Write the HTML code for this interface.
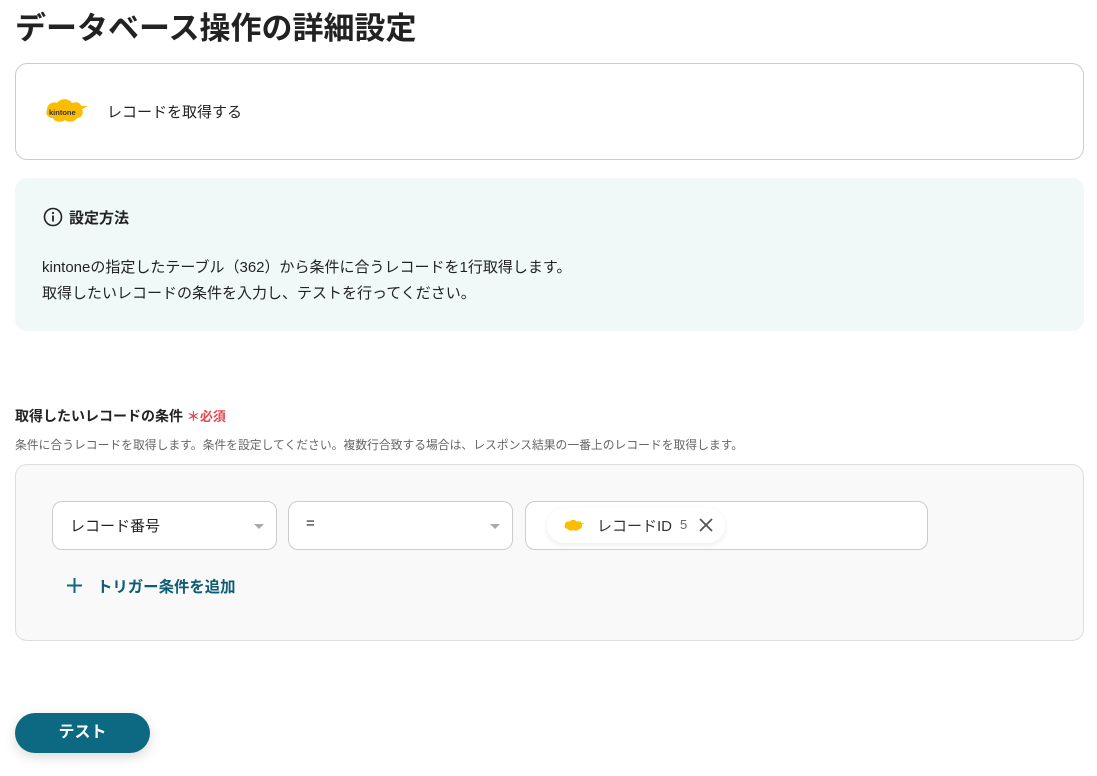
<!DOCTYPE html>
<html><head><meta charset="utf-8"><style>
*{box-sizing:border-box;margin:0;padding:0}
body{width:1097px;height:776px;background:#fff;font-family:"Liberation Sans","Noto Sans CJK JP",sans-serif;color:#222;position:relative;overflow:hidden}
.abs{position:absolute}
h1{position:absolute;left:15px;top:3px;font-size:31px;font-weight:700;color:#222}
.card{left:15px;top:63px;width:1069px;height:97px;border:1px solid #ccc;border-radius:12px}
.info{left:15px;top:178px;width:1069px;height:153px;background:#f1f9f8;border-radius:12px}
.sel{top:501px;height:49px;border:1px solid #ccc;border-radius:10px;background:#fff;font-size:15px;padding:13px 0 0 17px}
.sel .car{position:absolute;right:12px;top:22px;border:5px solid transparent;border-top:5px solid #aaa}
</style></head><body>
<h1>データベース操作の詳細設定</h1>
<div class="abs card">
<svg class="abs" style="left:27px;top:32px" width="46" height="32" viewBox="0 0 46 32"><path d="M4 14c0-6 6-9 10-7 3-5 12-5 15 0 4-2 9 0 9 3l7 0-6 3c2 4 0 9-5 9-2 4-9 5-12 2-4 3-11 2-12-2-5 0-8-4-6-8z" fill="#fbbd00"/><text x="6" y="19" font-size="7.5" font-weight="700" fill="#333" font-family="Liberation Sans">kintone</text></svg>
<div class="abs" style="left:91px;top:37px;font-size:15px">レコードを取得する</div>
</div>
<div class="abs info">
<svg class="abs" style="left:28px;top:29px" width="20" height="20" viewBox="0 0 20 20"><circle cx="10" cy="10" r="8.5" fill="none" stroke="#222" stroke-width="1.6"/><rect x="9.1" y="8.5" width="1.8" height="6" fill="#222"/><circle cx="10" cy="6" r="1.1" fill="#222"/></svg>
<div class="abs" style="left:54px;top:29px;font-size:15px;font-weight:700">設定方法</div>
<div class="abs" style="left:27px;top:77px;font-size:15px;line-height:26px">kintoneの指定したテーブル（362）から条件に合うレコードを1行取得します。<br>取得したいレコードの条件を入力し、テストを行ってください。</div>
</div>
<div class="abs" style="left:15px;top:406px;font-size:14px;font-weight:700">取得したいレコードの条件 <span style="color:#e5484d;font-size:13px">＊必須</span></div>
<div class="abs" style="left:15px;top:436px;font-size:11.8px;color:#666">条件に合うレコードを取得します。条件を設定してください。複数行合致する場合は、レスポンス結果の一番上のレコードを取得します。</div>
<div class="abs" style="left:15px;top:464px;width:1069px;height:177px;background:#f9f9f9;border:1px solid #ddd;border-radius:12px"></div>
<div class="abs sel" style="left:52px;width:225px">レコード番号<span class="car"></span></div>
<div class="abs sel" style="left:288px;width:225px">=<span class="car"></span></div>
<div class="abs sel" style="left:525px;width:403px;padding:0"></div>
<div class="abs" style="left:547px;top:508px;width:178px;height:35px;background:#fff;border-radius:18px;box-shadow:0 2px 6px rgba(0,0,0,.08)">
<svg class="abs" style="left:16px;top:10px" width="22" height="16" viewBox="0 0 46 32"><path d="M4 14c0-6 6-9 10-7 3-5 12-5 15 0 4-2 9 0 9 3l7 0-6 3c2 4 0 9-5 9-2 4-9 5-12 2-4 3-11 2-12-2-5 0-8-4-6-8z" fill="#fbbd00"/></svg>
<div class="abs" style="left:50px;top:7px;font-size:15px;color:#333">レコードID</div>
<div class="abs" style="left:133px;top:9px;font-size:13px;color:#666">5</div>
<svg class="abs" style="left:152px;top:10px" width="14" height="14" viewBox="0 0 14 14"><path d="M1 1l12 12M13 1L1 13" stroke="#555" stroke-width="1.8"/></svg>
</div>
<svg class="abs" style="left:66px;top:577px" width="17" height="17" viewBox="0 0 17 17"><path d="M8.5 1v15M1 8.5h15" stroke="#0d6882" stroke-width="2"/></svg>
<div class="abs" style="left:97px;top:575px;font-size:15.4px;font-weight:700;color:#0d5c73">トリガー条件を追加</div>
<div class="abs" style="left:15px;top:713px;width:135px;height:40px;background:#0d6882;border-radius:20px;color:#fff;font-weight:700;font-size:16px;text-align:center;line-height:40px;box-shadow:0 4px 12px rgba(0,0,0,.15)">テスト</div>
</body></html>
